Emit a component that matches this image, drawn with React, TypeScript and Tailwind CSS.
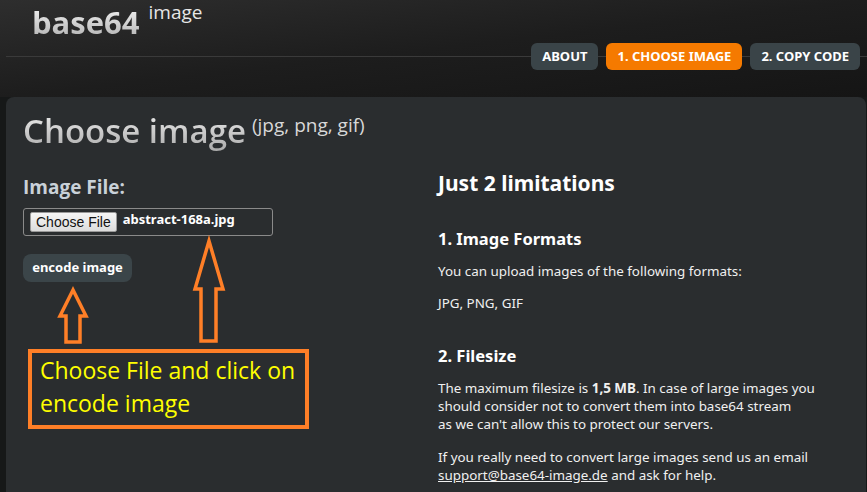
import React from "react";

const body = { fontFamily: '"Noto Sans", "DejaVu Sans", sans-serif' };
const head = { fontFamily: '"Open Sans", "Noto Sans", sans-serif' };

function NavButton({ label, active }: { label: string; active?: boolean }) {
  return (
    <a
      className={
        "flex h-[27px] items-center rounded-md px-[11px] text-[13px] font-bold text-white " +
        (active ? "bg-[#f57a00]" : "bg-[#3a4448]")
      }
      style={body}
    >
      {label}
    </a>
  );
}

export default function App() {
  return (
    <div className="relative h-[492px] w-[867px] overflow-hidden bg-[#161818]">
      {/* Header */}
      <header className="h-[97px] bg-gradient-to-br from-[#2e2e2e] via-[#1d1d1d] to-[#151515]">
        <div className="flex items-start pl-[32px]" style={head}>
          <span className="bg-gradient-to-b from-white to-[#a9a9a9] bg-clip-text text-[31px] font-bold leading-[44px] text-transparent">
            base64
          </span>
          <span className="ml-[9px] mt-[1px] text-[19px] leading-[22px] text-[#e6e6e6]">
            image
          </span>
        </div>
        <nav className="ml-[6px] mt-[-1px] flex items-center">
          <div className="h-px flex-1 bg-[#3a3a3a]" />
          <NavButton label="ABOUT" />
          <div className="h-px w-[8px] bg-[#3a3a3a]" />
          <NavButton label="1. CHOOSE IMAGE" active />
          <div className="h-px w-[8px] bg-[#3a3a3a]" />
          <NavButton label="2. COPY CODE" />
          <div className="h-px w-[7px] bg-[#3a3a3a]" />
        </nav>
      </header>

      {/* Panel */}
      <main className="ml-[6px] mr-[1px] h-[395px] rounded-t-lg bg-[#2a2d2f] pl-[17px]">
        <h1 className="flex items-start pt-[12px]" style={head}>
          <span className="bg-gradient-to-b from-[#f2f2f2] to-[#a8a8a8] bg-clip-text text-[33px] font-semibold leading-[44px] text-transparent">
            Choose image
          </span>
          <span className="ml-[6px] mt-[5px] text-[19px] leading-[22px] text-[#d8d8d8]">
            (jpg, png, gif)
          </span>
        </h1>

        <div className="mt-[20px] flex">
          {/* Left column */}
          <div className="w-[415px]">
            <div
              className="mt-[2px] text-[19px] font-bold leading-[24px] text-[#c9d1d8]"
              style={head}
            >
              Image File:
            </div>
            <div className="mt-[9px] flex h-[28px] w-[250px] items-center rounded-[3px] border border-[#8a8a8a] pl-[6px]">
              <button
                className="h-[20px] rounded-[2px] border border-[#9a9a9a] bg-gradient-to-b from-[#f6f6f6] to-[#dcdcdc] px-[5px] text-[14px] leading-[18px] text-[#111]"
                style={{ fontFamily: '"Liberation Sans", Arial, sans-serif' }}
              >
                Choose File
              </button>
              <span
                className="ml-[6px] mt-[-4px] text-[13px] font-bold text-white"
                style={body}
              >
                abstract-168a.jpg
              </span>
            </div>
            <button
              className="mt-[18px] flex h-[28px] w-[109px] items-center justify-center rounded-lg bg-[#3b4549] text-[13px] font-bold text-white"
              style={body}
            >
              encode image
            </button>
            <div className="h-[67px]" />
            <div
              className="ml-[5px] h-[80px] w-[281px] border-4 border-[#ff7f27] pl-[8px] pt-px text-[23px] leading-[33px] text-[#ffff00]"
              style={{ fontFamily: '"Open Sans", "Noto Sans", sans-serif' }}
            >
              Choose File and click on
              <br />
              encode image
            </div>
          </div>

          {/* Right column */}
          <div className="flex-1 text-[13.4px] leading-[18px] text-[#f0f0f0]" style={body}>
            <h2 className="mt-[-3px] text-[21px] font-bold leading-[26px] text-white">
              Just 2 limitations
            </h2>
            <h3 className="mt-[32px] text-[16.5px] font-bold leading-[22px] text-white">
              1. Image Formats
            </h3>
            <p className="mt-[12px]">You can upload images of the following formats:</p>
            <p className="mt-[14px]">JPG, PNG, GIF</p>
            <h3 className="mt-[33px] text-[16.5px] font-bold leading-[22px] text-white">
              2. Filesize
            </h3>
            <p className="mt-[12px] w-[410px]">
              The maximum filesize is <b>1,5 MB</b>. In case of large images you
              should consider not to convert them into base64 stream
              <br />
              as we can't allow this to protect our servers.
            </p>
            <p className="mt-[15px]">
              If you really need to convert large images send us an email
              <br />
              <a className="underline">support@base64-image.de</a> and ask for help.
            </p>
          </div>
        </div>
      </main>

      {/* annotation arrows drawn over the screenshot */}
      <svg
        className="pointer-events-none absolute left-0 top-0"
        width="867"
        height="492"
        viewBox="0 0 867 492"
      >
        <polygon
          points="73,290 60,316 66,316 66,342 80,342 80,316 86,316"
          fill="none"
          stroke="#ff7f27"
          strokeWidth="3.5"
          strokeLinejoin="miter"
        />
        <polygon
          points="209,241 195,289 201,289 201,341 216,341 216,289 223,289"
          fill="none"
          stroke="#ff7f27"
          strokeWidth="3.5"
          strokeLinejoin="miter"
        />
      </svg>
    </div>
  );
}
